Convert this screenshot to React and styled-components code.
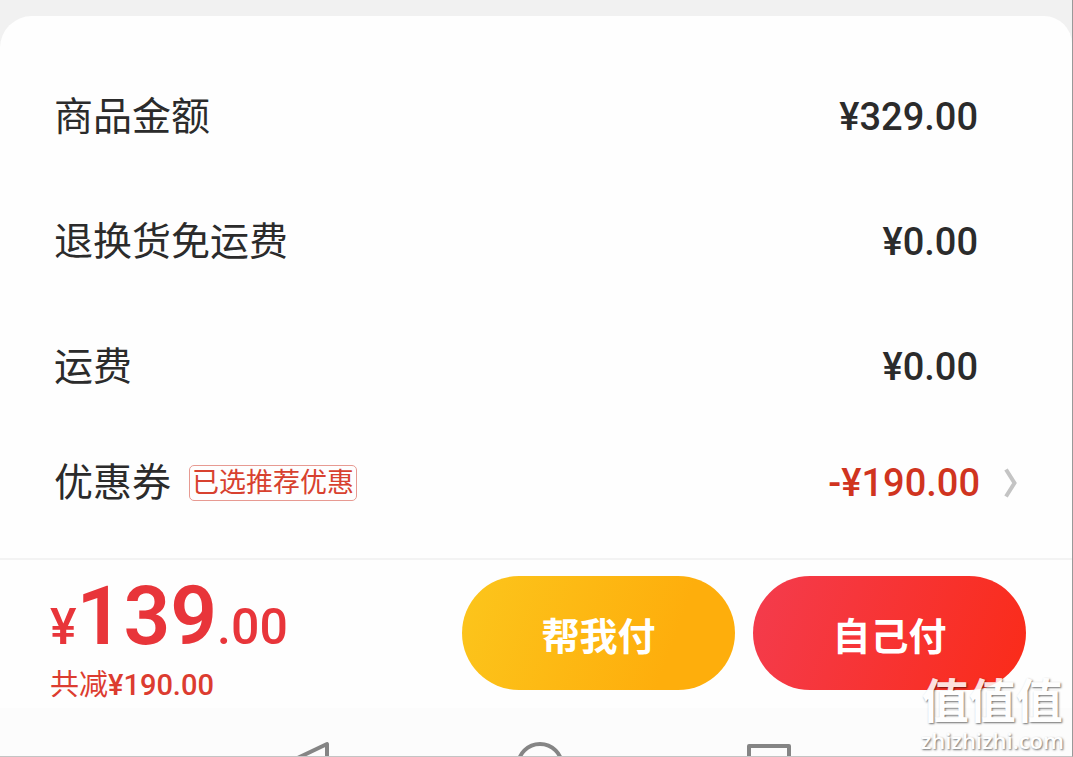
import React from "react";
import styled, { createGlobalStyle } from "styled-components";

const GlobalStyle = createGlobalStyle`
  * {
    box-sizing: border-box;
  }

  body {
    margin: 0;
    background: #f1f1f1;
    color: #2b2b2b;
    font-family: Roboto, "Noto Sans CJK SC", sans-serif;
  }

  button {
    border: 0;
    padding: 0;
    background: none;
    color: inherit;
    font-family: inherit;
    cursor: pointer;
  }
`;

const Page = styled.div`
  position: relative;
  padding-top: 16px;
  border-right: 1px solid #999;
  border-bottom: 1px solid #c4c4c4;
  overflow: hidden;
`;

const Card = styled.section`
  padding: 38px 0 21px 54px;
  background: #fefefe;
  border-radius: 32px 28px 0 0;
`;

const Row = styled.div`
  display: flex;
  align-items: center;
  justify-content: space-between;
  height: ${({ $compact }) => ($compact ? "108px" : "125px")};
  padding-right: ${({ $compact }) => ($compact ? "52px" : "94px")};
`;

const Label = styled.span`
  display: flex;
  align-items: center;
  gap: 18px;
  font-size: 39px;
  line-height: 56px;
`;

const Tag = styled.span`
  padding: 0 2px;
  border: 1px solid #e79a92;
  border-radius: 5px;
  color: #d8412f;
  font-size: 27px;
  line-height: 34px;
`;

const Amount = styled.span`
  font-size: 38px;
  font-weight: 500;
  line-height: 44px;
`;

const CouponButton = styled.button`
  display: flex;
  align-items: center;
  gap: 22px;
  color: #d0341f;
`;

const Footer = styled.footer`
  display: flex;
  align-items: flex-start;
  justify-content: space-between;
  height: 150px;
  padding: 16px 46px 0 50px;
  border-top: 2px solid #f3f3f3;
  background: #fefefe;
`;

const Total = styled.div`
  color: #e8353a;
  font-size: 50px;
  font-weight: 500;
  line-height: 80px;
  white-space: nowrap;
`;

const Whole = styled.span`
  font-size: 82px;
  font-weight: 600;
`;

const Saved = styled.div`
  color: #dc3c30;
  font-size: 29px;
  line-height: 36px;
`;

const SavedAmount = styled.span`
  font-weight: 500;
`;

const Actions = styled.div`
  display: flex;
  gap: 18px;
`;

const PayButton = styled.button`
  width: 273px;
  height: 114px;
  border-radius: 57px;
  background: ${({ $self }) =>
    $self
      ? "linear-gradient(110deg, #f43b4b 5%, #fa2c1b 95%)"
      : "linear-gradient(110deg, #fcc41b 5%, #feae0c 75%)"};
  color: #fff;
  font-size: 38px;
  font-weight: 700;
`;

const SystemNav = styled.nav`
  display: flex;
  justify-content: center;
  gap: 181px;
  height: 48px;
  padding: 32px 0 0 8px;
  background: #fcfcfc;
  overflow: hidden;
`;

const NavButton = styled.button`
  flex: none;
  width: 48px;
  height: 48px;

  svg {
    display: block;
  }
`;

const Watermark = styled.div`
  position: absolute;
  right: 8px;
  bottom: 2px;
  color: #fff;
  opacity: 0.85;
  text-align: center;
  text-shadow: 1px 1px 2px rgba(0, 0, 0, 0.65);
  pointer-events: none;
`;

const WatermarkName = styled.div`
  font-size: 47px;
  font-weight: 700;
  line-height: 48px;
`;

const WatermarkSite = styled.div`
  font-family: "Open Sans", sans-serif;
  font-size: 22px;
  font-weight: 600;
  line-height: 28px;
`;

const fees = [
  { label: "商品金额", value: "¥329.00" },
  { label: "退换货免运费", value: "¥0.00" },
  { label: "运费", value: "¥0.00" },
];

const Chevron = () => (
  <svg width="18" height="32" viewBox="0 0 18 32" fill="none">
    <path d="M4 2.5L12.5 16L4 29.5" stroke="#c4c4c4" strokeWidth="4" />
  </svg>
);

const NavIcon = ({ children }) => (
  <svg
    width="48"
    height="48"
    viewBox="0 0 48 48"
    fill="none"
    stroke="#858585"
    strokeWidth="4"
    strokeLinejoin="round"
  >
    {children}
  </svg>
);

const App = () => {
  return (
    <>
      <GlobalStyle />
      <Page>
        <Card>
          {fees.map(({ label, value }) => (
            <Row key={label}>
              <Label>{label}</Label>
              <Amount>{value}</Amount>
            </Row>
          ))}
          <Row $compact>
            <Label>
              优惠券
              <Tag>已选推荐优惠</Tag>
            </Label>
            <CouponButton type="button">
              <Amount>-¥190.00</Amount>
              <Chevron />
            </CouponButton>
          </Row>
        </Card>
        <Footer>
          <div>
            <Total>
              ¥<Whole>139</Whole>.00
            </Total>
            <Saved>
              共减<SavedAmount>¥190.00</SavedAmount>
            </Saved>
          </div>
          <Actions>
            <PayButton type="button">帮我付</PayButton>
            <PayButton type="button" $self>
              自己付
            </PayButton>
          </Actions>
        </Footer>
        <SystemNav>
          <NavButton type="button" aria-label="Back">
            <NavIcon>
              <path d="M40 4V44L-2 24Z" />
            </NavIcon>
          </NavButton>
          <NavButton type="button" aria-label="Home">
            <NavIcon>
              <circle cx="24" cy="26" r="22" />
            </NavIcon>
          </NavButton>
          <NavButton type="button" aria-label="Recent apps">
            <NavIcon>
              <rect x="4" y="6" width="40" height="40" />
            </NavIcon>
          </NavButton>
        </SystemNav>
        <Watermark>
          <WatermarkName>值值值</WatermarkName>
          <WatermarkSite>zhizhizhi.com</WatermarkSite>
        </Watermark>
      </Page>
    </>
  );
};

export default App;
